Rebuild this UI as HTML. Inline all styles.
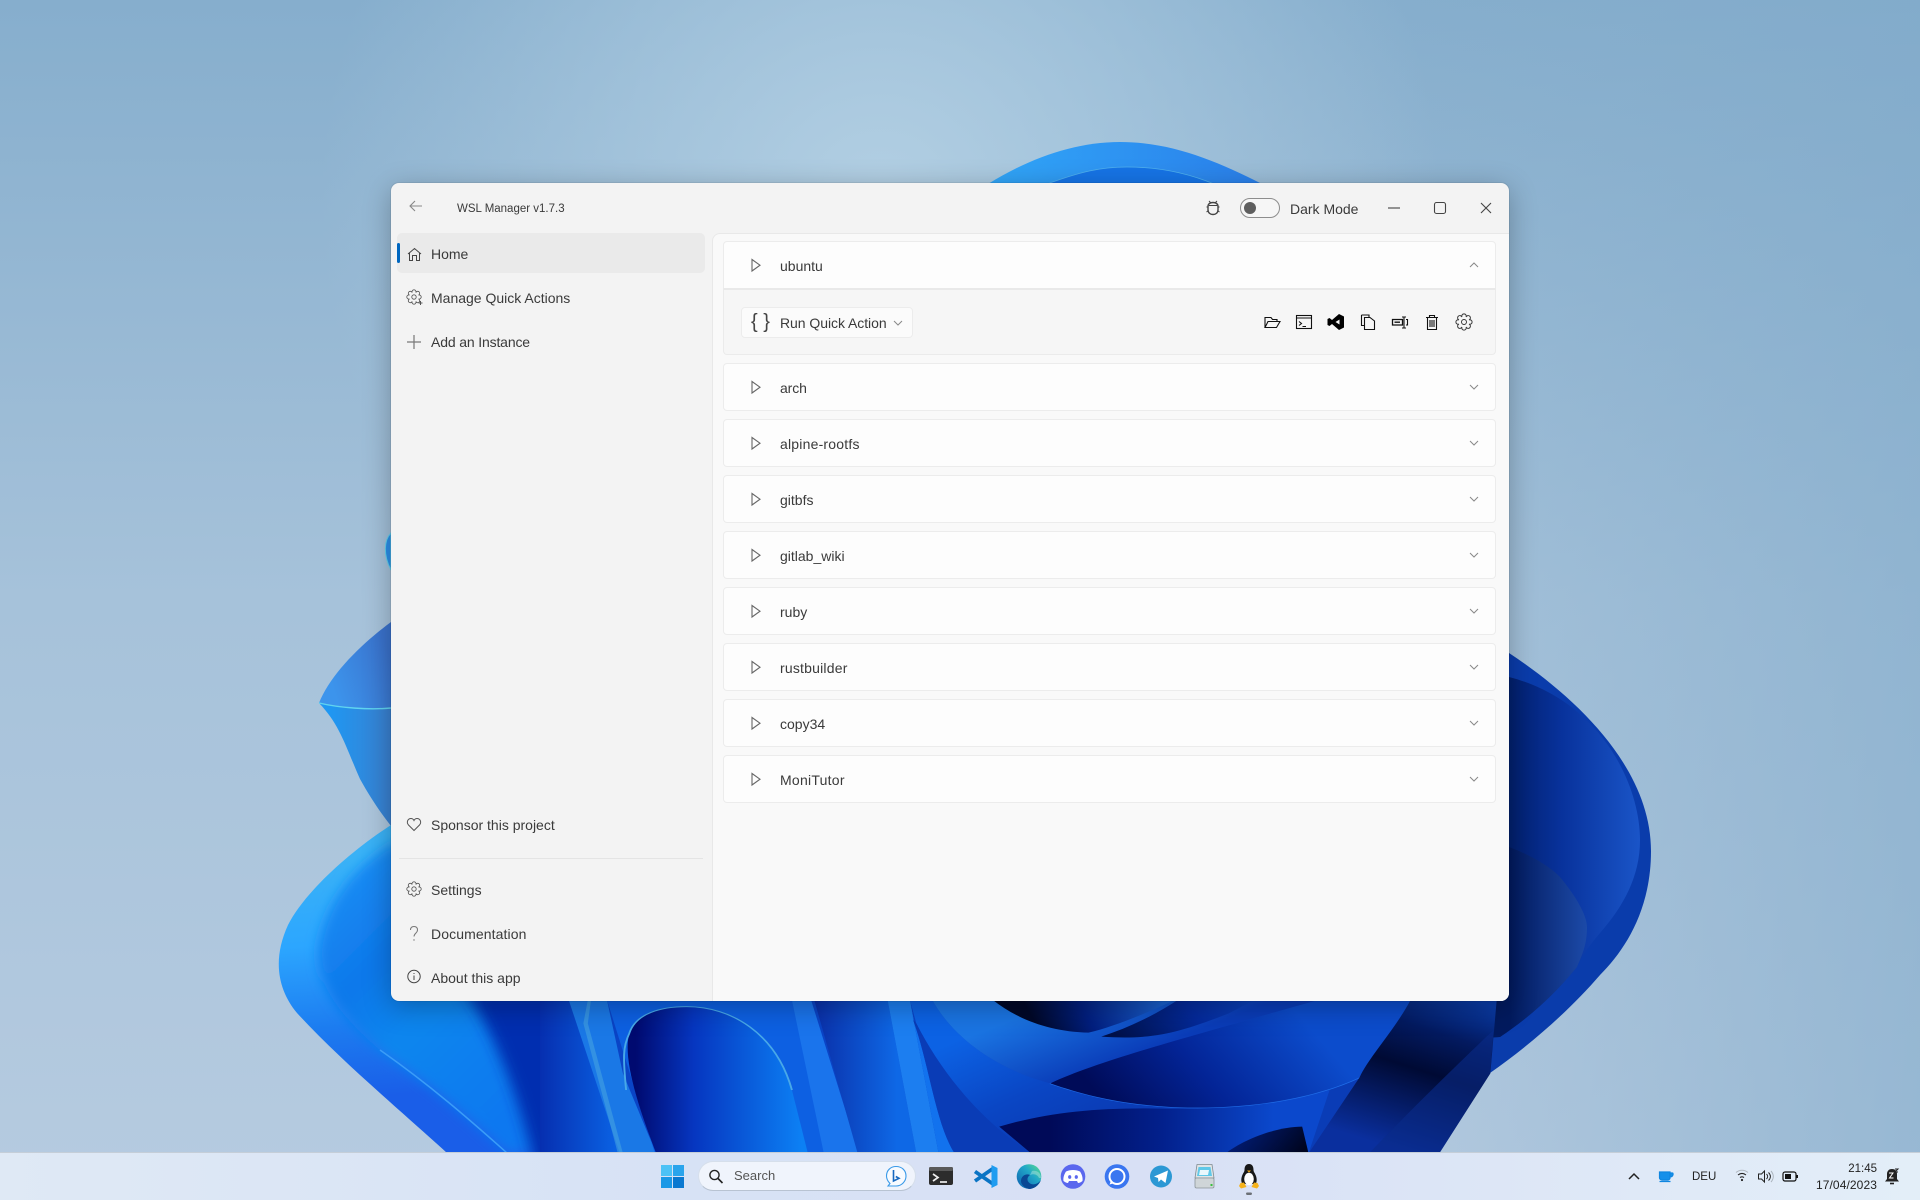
<!DOCTYPE html>
<html lang="en"><head><meta charset="utf-8"><title>WSL Manager</title>
<style>
*{box-sizing:border-box}
html,body{margin:0;padding:0;width:1920px;height:1200px;overflow:hidden;background:#a8c4dc;font-family:"Liberation Sans",sans-serif}
svg{position:absolute;left:0;top:0;overflow:visible}
#win{position:absolute;left:391px;top:183px;width:1118px;height:818px;background:#f3f3f3;border-radius:8px;box-shadow:0 6px 28px rgba(0,0,0,.28),0 0 0 1px rgba(0,0,0,.06)}
#content{position:absolute;left:712px;top:233px;width:797px;height:768px;background:#f9f9f9;border-left:1px solid #e8e8e8;border-top:1px solid #e8e8e8;border-top-left-radius:8px;border-bottom-right-radius:8px}
.home{position:absolute;left:397px;top:233px;width:308px;height:40px;background:#eaeaea;border-radius:5px}
.ind{position:absolute;left:397px;top:243px;width:3px;height:20px;background:#0067c0;border-radius:2px}
.div{position:absolute;left:399px;top:858px;width:304px;height:1px;background:#e4e4e4}
.row{position:absolute;left:723px;width:773px;height:48px;background:#fdfdfd;border:1px solid #ececec;border-radius:4px}
.panel{position:absolute;left:723px;top:288px;width:773px;height:67px;background:#f6f6f6;border:1px solid #ebebeb;border-top:2px solid #e9e9e9;border-radius:0 0 4px 4px}
.btn{position:absolute;left:741px;top:307px;width:172px;height:31px;background:#fbfbfb;border:1px solid #ececec;border-radius:4px}
.t{position:absolute;white-space:nowrap;line-height:20px;font-size:14px;color:#3a3a3a}
#task{position:absolute;left:0;top:1152px;width:1920px;height:48px;background:linear-gradient(90deg,#dfe9f5 0%,#d7e2f5 35%,#d8e0f5 60%,#e3eef8 100%);border-top:1px solid #c5ced8}
.pill{position:absolute;left:698px;top:1161px;width:218px;height:30px;border-radius:15px;background:#f0f4fc;border:1px solid #d6dfeb;border-bottom:1px solid #b8c3d2}
</style></head><body>

<svg width="1920" height="1200" viewBox="0 0 1920 1200">
<defs>
<filter id="b6" x="-30%" y="-30%" width="160%" height="160%"><feGaussianBlur stdDeviation="6"/></filter>
<filter id="b10" x="-30%" y="-30%" width="160%" height="160%"><feGaussianBlur stdDeviation="7"/></filter>
<linearGradient id="sky" x1="0" y1="0" x2="0" y2="1"><stop offset="0" stop-color="#86aecd"/><stop offset=".5" stop-color="#a6c2da"/><stop offset="1" stop-color="#b6cbe0"/></linearGradient>
<radialGradient id="glow" gradientUnits="userSpaceOnUse" cx="880" cy="200" r="560"><stop offset="0" stop-color="#b2cfe3" stop-opacity="1"/><stop offset="1" stop-color="#b2cfe3" stop-opacity="0"/></radialGradient>
<linearGradient id="skyR" x1="0" y1="0" x2="1" y2="0"><stop offset=".7" stop-color="#7fa9c9" stop-opacity="0"/><stop offset="1" stop-color="#7fa9c9" stop-opacity=".55"/></linearGradient>
<linearGradient id="top1" x1="0" y1="0" x2="1" y2="0"><stop offset="0" stop-color="#31a6f8"/><stop offset="1" stop-color="#2a7fea"/></linearGradient>
<linearGradient id="pet1" gradientUnits="userSpaceOnUse" x1="330" y1="680" x2="391" y2="660"><stop offset="0" stop-color="#3c94ec"/><stop offset="1" stop-color="#3a72cc"/></linearGradient>
<linearGradient id="pet2" gradientUnits="userSpaceOnUse" x1="330" y1="730" x2="391" y2="730"><stop offset="0" stop-color="#1f97f2"/><stop offset="1" stop-color="#3a80cf"/></linearGradient>
<linearGradient id="low1" gradientUnits="userSpaceOnUse" x1="320" y1="860" x2="340" y2="1100"><stop offset="0" stop-color="#3ab2f6"/><stop offset=".35" stop-color="#2ca6ff"/><stop offset=".7" stop-color="#1c7cf0"/><stop offset="1" stop-color="#1a5ee8"/></linearGradient>
<linearGradient id="low2" gradientUnits="userSpaceOnUse" x1="320" y1="900" x2="520" y2="1100"><stop offset="0" stop-color="#1a8cf4"/><stop offset=".3" stop-color="#0e78ea"/><stop offset=".55" stop-color="#0f86ee"/><stop offset="1" stop-color="#0f78f0"/></linearGradient>
<linearGradient id="archG" gradientUnits="userSpaceOnUse" x1="150" y1="0" x2="410" y2="0"><stop offset="0" stop-color="#000a70"/><stop offset=".35" stop-color="#0636c0"/><stop offset="1" stop-color="#0c80f4"/></linearGradient>
<linearGradient id="s1" gradientUnits="userSpaceOnUse" x1="0" y1="0" x2="120" y2="0"><stop offset="0" stop-color="#062fb0"/><stop offset="1" stop-color="#0a62e4"/></linearGradient>
<linearGradient id="s2" gradientUnits="userSpaceOnUse" x1="430" y1="0" x2="560" y2="0"><stop offset="0" stop-color="#0a2fa8"/><stop offset="1" stop-color="#0e68e6"/></linearGradient>
<linearGradient id="fa" gradientUnits="userSpaceOnUse" x1="700" y1="120" x2="820" y2="280"><stop offset="0" stop-color="#1a74e2"/><stop offset="1" stop-color="#0a3cb8"/></linearGradient>
<linearGradient id="fb" gradientUnits="userSpaceOnUse" x1="620" y1="180" x2="830" y2="420"><stop offset="0" stop-color="#0c62e4"/><stop offset=".6" stop-color="#0a46c4"/><stop offset="1" stop-color="#0a3cb6"/></linearGradient>
<linearGradient id="fc" gradientUnits="userSpaceOnUse" x1="800" y1="420" x2="1150" y2="420"><stop offset="0" stop-color="#000a58"/><stop offset=".5" stop-color="#02208c"/><stop offset="1" stop-color="#0b48cc"/></linearGradient>
<linearGradient id="fd" gradientUnits="userSpaceOnUse" x1="860" y1="280" x2="1210" y2="120"><stop offset="0" stop-color="#000b58"/><stop offset=".45" stop-color="#032496"/><stop offset="1" stop-color="#0c4ccc"/></linearGradient>
<linearGradient id="fe" gradientUnits="userSpaceOnUse" x1="780" y1="110" x2="980" y2="50"><stop offset="0" stop-color="#000828"/><stop offset=".4" stop-color="#021f80"/><stop offset="1" stop-color="#1a62d0"/></linearGradient>
<linearGradient id="ff" gradientUnits="userSpaceOnUse" x1="900" y1="130" x2="1110" y2="40"><stop offset="0" stop-color="#001048"/><stop offset=".6" stop-color="#042a9c"/><stop offset="1" stop-color="#0a40b8"/></linearGradient>
<linearGradient id="fg" gradientUnits="userSpaceOnUse" x1="1280" y1="440" x2="1510" y2="60"><stop offset="0" stop-color="#0a2f9e"/><stop offset=".5" stop-color="#000a34"/><stop offset=".75" stop-color="#031a60"/><stop offset="1" stop-color="#0a3ca8"/></linearGradient>
<linearGradient id="fh" gradientUnits="userSpaceOnUse" x1="1080" y1="420" x2="1200" y2="470"><stop offset="0" stop-color="#021f80"/><stop offset="1" stop-color="#000520"/></linearGradient>
<linearGradient id="r1" gradientUnits="userSpaceOnUse" x1="1510" y1="0" x2="1640" y2="0"><stop offset="0" stop-color="#02206e"/><stop offset=".4" stop-color="#08329c"/><stop offset="1" stop-color="#1a55c8"/></linearGradient>
<linearGradient id="r2" gradientUnits="userSpaceOnUse" x1="1510" y1="0" x2="1587" y2="0"><stop offset="0" stop-color="#021a5e"/><stop offset="1" stop-color="#1c4aa8"/></linearGradient>
<linearGradient id="edge" x1="1" y1="0" x2="0" y2="1"><stop offset="0" stop-color="#5ee08a"/><stop offset=".4" stop-color="#21a8c8"/><stop offset="1" stop-color="#0c5cb0"/></linearGradient>
<clipPath id="bot"><rect x="0" y="0" width="1920" height="1153"/></clipPath>
<clipPath id="petal"><path d="M391 825C345 855 303 895 288 925C272 960 278 990 297 1013C340 1060 400 1110 447 1153H570V825Z"/></clipPath>
<symbol id="gear" viewBox="0 0 16 16"><path d="M12.43 6.16A2 2 0 1 1 12.43 9.84A2 2 0 1 1 9.84 12.43A2 2 0 1 1 6.16 12.43A2 2 0 1 1 3.57 9.84A2 2 0 1 1 3.57 6.16A2 2 0 1 1 6.16 3.57A2 2 0 1 1 9.84 3.57A2 2 0 1 1 12.43 6.16Z" fill="none" stroke="currentColor" stroke-width=".85"/><circle cx="8" cy="8" r="2.2" fill="none" stroke="currentColor" stroke-width=".85"/></symbol>
</defs>

<rect width="1920" height="1200" fill="url(#sky)"/>
<rect width="1920" height="1200" fill="url(#skyR)"/>
<rect width="1920" height="900" fill="url(#glow)"/>

<!-- top dome -->
<path d="M988 184C1030 158 1075 142 1120 142C1170 142 1215 160 1262 184Z" fill="url(#top1)"/>
<path d="M1047 184C1080 172 1100 167 1127 167C1160 167 1190 174 1214 184Z" fill="#1674e6" stroke="#4fb0ee" stroke-width=".8"/>

<!-- left -->
<path d="M391 533C384 540 383 555 391 570Z" fill="#2b8fe8" stroke="#5fd0f0"/>
<path d="M391 622C360 645 330 675 319 703C340 708 370 710 391 708Z" fill="url(#pet1)"/>
<path d="M319 703C340 725 345 745 360 779C370 797 380 812 391 826V708C370 710 340 708 319 703Z" fill="url(#pet2)"/>
<path d="M319 703C340 708 370 710 391 708" fill="none" stroke="#60d4f0" stroke-width="1.4"/>
<path d="M391 825C345 855 303 895 288 925C272 960 278 990 297 1013C340 1060 400 1110 447 1153H570V825Z" fill="url(#low1)"/>
<g clip-path="url(#petal)">
<path d="M391 844C350 870 325 905 318 948C316 985 340 1015 380 1050C430 1085 470 1120 507 1153H570V844Z" fill="url(#low2)" filter="url(#b6)"/>
<path d="M380 1050C430 1085 470 1120 507 1153" fill="none" stroke="#3a9cf8" stroke-width="1.5"/>
<path d="M462 990L590 990L580 1170H536C522 1110 502 1050 472 1001Z" fill="#062fb0" filter="url(#b10)"/>
</g>

<!-- right -->
<path d="M1509 653C1580 700 1651 770 1651 851C1651 910 1625 950 1600 975C1570 1010 1530 1045 1490 1073L1439 1153H1300V1000H1509Z" fill="#0a3cab"/>
<path d="M1509 677C1540 685 1565 700 1583 717C1620 750 1640 800 1640 840C1640 880 1620 910 1600 933C1590 945 1582 955 1577 967C1550 1000 1525 1020 1500 1037L1450 1040V677Z" fill="url(#r1)"/>
<path d="M1509 847C1530 855 1548 865 1560 877C1575 895 1587 915 1587 927C1587 945 1582 955 1577 967C1550 1000 1525 1020 1500 1037L1450 1040V847Z" fill="url(#r2)"/>

<!-- bottom folds authored in zoom coords -->
<g clip-path="url(#bot)">
<g transform="translate(540,990) scale(.6378,.3333)">
<rect x="0" y="30" width="1300" height="460" fill="#0a44c6"/>
<path d="M0 30L50 30L125 490H0Z" fill="url(#s1)"/>
<path d="M45 30L105 30L130 250L182 490L125 490Z" fill="#1a78e6"/>
<path d="M75 30L80 30L75 100L130 490L122 490L68 100Z" fill="#52b0e0" opacity=".45"/>
<path d="M105 30L400 30L500 490L180 490Z" fill="#0d60e2"/>
<path d="M182 490C150 330 130 200 140 130C150 70 190 50 230 50C300 50 370 130 395 300L420 490Z" fill="url(#archG)"/>
<path d="M135 300C130 200 130 170 140 130C150 70 190 50 230 50C300 50 370 130 395 300" fill="none" stroke="#48a8e8" stroke-width="3"/>
<path d="M395 30L425 30L500 490H445Z" fill="#1a74ec"/>
<path d="M430 30L545 30L590 490H498Z" fill="url(#s2)"/>
<path d="M545 30L580 30L625 490H590Z" fill="#1c7ef0"/>
<path d="M580 30L615 30C650 150 720 240 800 280C860 320 920 345 1000 352C1120 360 1220 320 1285 262L1210 490H770C690 390 630 250 590 100Z" fill="url(#fb)"/>
<path d="M585 90C610 220 620 400 650 490H625L580 30Z" fill="#1272ee"/>
<path d="M590 100C630 250 690 390 770 490H650C620 400 610 220 585 90Z" fill="#0a3cb6"/>
<path d="M615 30C650 150 720 240 800 280C880 210 1000 150 1220 30Z" fill="url(#fa)"/>
<path d="M720 410C790 370 860 355 950 355C1060 360 1150 350 1238 300L1205 490H770Z" fill="url(#fc)"/>
<path d="M800 280C860 320 920 345 1000 352C1120 360 1220 320 1285 262" fill="none" stroke="#1f6ce8" stroke-width="4"/>
<path d="M800 280C880 210 1000 150 1220 30L1365 30C1340 120 1300 200 1285 262C1220 320 1120 360 1000 352C920 345 860 320 800 280Z" fill="url(#fd)"/>
<path d="M1075 490C1110 440 1160 410 1195 410L1205 490Z" fill="url(#fh)"/>
<path d="M710 30C750 90 800 125 860 128C900 110 950 70 995 30Z" fill="url(#fe)"/>
<path d="M880 140C960 150 1000 130 1080 70L1120 30H1000C960 80 920 115 880 140Z" fill="url(#ff)"/>
<path d="M1285 262C1300 200 1340 120 1365 30L1500 30L1490 250L1410 490H1205Z" fill="url(#fg)"/>
<path d="M1300 490C1370 350 1440 220 1495 120L1490 250L1410 490Z" fill="#0a2c88" opacity=".6"/>
</g></g>
</svg>

<div id="win"></div>
<div id="content"></div>
<div class="home"></div><div class="ind"></div><div class="div"></div>

<div class="row" style="top:241px;border-radius:4px 4px 0 0;height:48px"></div>
<div class="panel"></div>
<div class="btn"></div>
<div class="row" style="top:363px"></div>
<div class="row" style="top:419px"></div>
<div class="row" style="top:475px"></div>
<div class="row" style="top:531px"></div>
<div class="row" style="top:587px"></div>
<div class="row" style="top:643px"></div>
<div class="row" style="top:699px"></div>
<div class="row" style="top:755px"></div>

<div class="t" style="left:457px;top:199px;font-size:11.5px">WSL Manager v1.7.3</div>
<div class="t" style="left:1290px;top:199px;font-size:14px">Dark Mode</div>
<div class="t" style="left:431px;top:244px">Home</div>
<div class="t" style="left:431px;top:288px">Manage Quick Actions</div>
<div class="t" style="left:431px;top:332px;letter-spacing:-.15px">Add an Instance</div>
<div class="t" style="left:431px;top:815px">Sponsor this project</div>
<div class="t" style="left:431px;top:880px">Settings</div>
<div class="t" style="left:431px;top:924px;letter-spacing:.1px">Documentation</div>
<div class="t" style="left:431px;top:968px">About this app</div>

<div class="t" style="left:780px;top:256px">ubuntu</div>
<div class="t" style="left:780px;top:313px;letter-spacing:-.05px">Run Quick Action</div>
<div class="t" style="left:751px;top:311px;font-size:20px;line-height:22px;color:#444">{ }</div>
<div class="t" style="left:780px;top:378px;letter-spacing:-.1px">arch</div>
<div class="t" style="left:780px;top:434px;letter-spacing:.2px">alpine-rootfs</div>
<div class="t" style="left:780px;top:490px">gitbfs</div>
<div class="t" style="left:780px;top:546px">gitlab_wiki</div>
<div class="t" style="left:780px;top:602px">ruby</div>
<div class="t" style="left:780px;top:658px;letter-spacing:.2px">rustbuilder</div>
<div class="t" style="left:780px;top:714px">copy34</div>
<div class="t" style="left:780px;top:770px;letter-spacing:.25px">MoniTutor</div>

<svg width="1920" height="1200" viewBox="0 0 1920 1200" fill="none" stroke="#555" stroke-width="1">
<!-- back -->
<path d="M422 206H410M415 201L410 206L415 211" stroke="#888" stroke-width="1.1"/>
<!-- home -->
<path d="M408 254L414.5 248.5L421 254M409.5 253V260.5H412.5V255.5H416.5V260.5H419.5V253" stroke="#444"/>
<!-- manage gear -->
<use href="#gear" x="406" y="289" width="16" height="16" color="#555"/>
<path d="M418.5 303H422.5M420.5 301V305" stroke="#555"/>
<!-- add -->
<path d="M414 335V349M407 342H421" stroke="#777" stroke-width="1.2"/>
<!-- heart -->
<path d="M414 830.5L408.5 825C406 822 408 818.5 411 818.5C412.5 818.5 413.5 819.5 414 820.5C414.5 819.5 415.5 818.5 417 818.5C420 818.5 422 822 419.5 825Z" stroke="#555"/>
<!-- settings -->
<use href="#gear" x="406" y="881" width="16" height="16" color="#555"/>
<!-- help -->
<path d="M410.5 930C410.5 927.5 412 926.5 414 926.5C416.5 926.5 417.5 928 417.5 930C417.5 933 414 933.5 414 936.5" stroke="#777"/>
<circle cx="414" cy="940" r=".7" fill="#777" stroke="none"/>
<!-- info -->
<circle cx="414" cy="976.5" r="6.2" stroke="#444"/>
<path d="M414 975.5V980M414 973V974" stroke="#444"/>

<!-- bug -->
<path d="M1208 206.5C1208 203.5 1210.5 202.5 1213 202.5C1215.5 202.5 1218 203.5 1218 206.5V210C1218 213 1215.5 214.5 1213 214.5C1210.5 214.5 1208 213 1208 210Z" stroke="#444" stroke-width="1.4"/>
<path d="M1209 201L1211 203M1217 201L1215 203M1206.5 207H1208.5M1217.5 207H1219.5M1206.5 212L1208.5 210.5M1219.5 212L1217.5 210.5M1209 205.5H1217" stroke="#444"/>
<!-- toggle -->
<rect x="1240.5" y="198.5" width="39" height="19" rx="9.5" stroke="#8d8d8d" fill="#f6f6f6"/>
<circle cx="1250" cy="208" r="6" fill="#5e5e5e" stroke="none"/>
<!-- window controls -->
<path d="M1388 208H1400" stroke="#444" stroke-width="1.1"/>
<rect x="1434.5" y="202.5" width="11" height="11" rx="2" stroke="#444" stroke-width="1.1"/>
<path d="M1481 203L1491 213M1491 203L1481 213" stroke="#444" stroke-width="1.1"/>

<!-- chevrons -->
<path d="M1470 267L1474 263L1478 267" stroke="#888"/>
<path d="M1470 385L1474 389L1478 385M1470 441L1474 445L1478 441M1470 497L1474 501L1478 497M1470 553L1474 557L1478 553M1470 609L1474 613L1478 609M1470 665L1474 669L1478 665M1470 721L1474 725L1478 721M1470 777L1474 781L1478 777" stroke="#888"/>
<path d="M894 321L898 325L902 321" stroke="#888"/>
<!-- triangles -->
<g stroke="#666" stroke-width="1.1">
<path d="M752 259.5V271L760 265.2Z"/><path d="M752 381.5V393L760 387.2Z"/><path d="M752 437.5V449L760 443.2Z"/><path d="M752 493.5V505L760 499.2Z"/><path d="M752 549.5V561L760 555.2Z"/><path d="M752 605.5V617L760 611.2Z"/><path d="M752 661.5V673L760 667.2Z"/><path d="M752 717.5V729L760 723.2Z"/><path d="M752 773.5V785L760 779.2Z"/>
</g>

<!-- panel icons -->
<g stroke="#111" stroke-width="1.1">
<path d="M1265 327.5V317.5H1271L1272.5 319.5H1277V321.5M1265 327.5L1268 321.5H1280L1276.5 327.5Z"/>
<rect x="1296.5" y="315.5" width="15" height="13"/>
<path d="M1296.5 318H1311.5M1299 321.5L1301.5 323.5L1299 325.5M1302.5 326.5H1306"/>
<path d="M1339 314L1344 316.5V327.5L1339 330L1332 324L1329.5 326L1327.5 325V319L1329.5 318L1332 320ZM1339.5 319.5L1335.5 322L1339.5 324.5Z" fill="#000" fill-rule="evenodd" stroke="none"/>
<path d="M1361.5 315V325.5H1364.5M1361.5 315H1369V317.5M1364.5 317.5H1370L1374.5 321V329.5H1364.5Z"/>
<path d="M1392.5 319.5H1402.5V325H1392.5ZM1394.5 322.2H1400" stroke-width="1.3"/>
<path d="M1404 317V328M1402 317H1406M1402 328H1406M1406 319.5H1407.5V325H1406"/>
<path d="M1426 317.5H1438M1429.5 317.5V315.5H1434.5V317.5M1427.5 317.5V329.5H1436.5V317.5M1430 320V327M1432 320V327M1434 320V327"/>
</g>
<use href="#gear" x="1455" y="313" width="18" height="18" color="#333"/>
</svg>

<div id="task"></div>
<div class="pill"></div>
<div class="t" style="left:734px;top:1166px;font-size:13px;color:#555">Search</div>
<div class="t" style="left:1692px;top:1167px;font-size:11.5px;color:#222">DEU</div>
<div class="t" style="left:1800px;width:77px;top:1159px;font-size:11.5px;color:#222;text-align:right">21:45</div>
<div class="t" style="left:1800px;width:77px;top:1175px;font-size:12px;letter-spacing:.1px;color:#222;text-align:right">17/04/2023</div>

<svg width="1920" height="1200" viewBox="0 0 1920 1200" fill="none">
<!-- start -->
<rect x="661" y="1165" width="11" height="11" fill="#4cc2f6"/><rect x="673" y="1165" width="11" height="11" fill="#2aa4ec"/><rect x="661" y="1177" width="11" height="11" fill="#1a98e6"/><rect x="673" y="1177" width="11" height="11" fill="#0a78d0"/>
<!-- magnifier -->
<circle cx="714.5" cy="1175" r="4.6" stroke="#222" stroke-width="1.4"/><path d="M718 1178.5L722.5 1183" stroke="#222" stroke-width="1.6"/>
<!-- bing -->
<path d="M896 1166.5C902 1166.5 906 1170.5 906 1176C906 1181 902 1186 896 1186H888L890 1183.5C888 1181.5 886.5 1179 886.5 1176C886.5 1170.5 890.5 1166.5 896 1166.5Z" stroke="#3a9ae8" stroke-width="1.1" fill="#f8fbff"/>
<path d="M893.5 1170V1181L899 1178.3L895.8 1176.5" stroke="#1668c0" stroke-width="1.6"/>
<!-- terminal -->
<rect x="929" y="1167" width="24" height="18" rx="2" fill="#2c2c2c"/><rect x="929" y="1167" width="24" height="4" rx="1.5" fill="#5a5a5a"/>
<path d="M933 1174L938 1177.5L933 1181" stroke="#eee" stroke-width="1.7"/><path d="M940 1182H947" stroke="#eee" stroke-width="1.7"/>
<!-- vscode -->
<path d="M975 1171.5L993 1184M975 1181L993 1168.5" stroke="#0a74c4" stroke-width="3.8"/>
<path d="M991.5 1165L997.5 1168V1185L991.5 1188Z" fill="#1f9cf0"/>
<!-- edge -->
<circle cx="1029" cy="1176.5" r="12.3" fill="url(#edge)"/>
<path d="M1041 1180C1038 1184 1034 1185 1031 1184C1027 1182 1026 1178 1030 1175C1026 1173 1021 1176 1021 1181C1021 1185 1025 1188 1029 1189C1034 1189 1039 1185 1041 1180Z" fill="#0a4894"/>
<path d="M1030 1175C1034 1173 1038 1175 1039 1178L1041 1178C1041 1173 1037 1170 1032 1171Z" fill="#dff5e8" opacity=".35"/>
<!-- discord -->
<circle cx="1073" cy="1176.5" r="12.3" fill="#5a67ee"/>
<path d="M1066 1171.5C1070 1169.5 1076 1169.5 1080 1171.5C1082 1174.5 1083 1178 1082.5 1181C1080.5 1182.5 1079 1183 1078 1183L1077 1181H1069L1068 1183C1067 1183 1065.5 1182.5 1063.5 1181C1063 1178 1064 1174.5 1066 1171.5Z" fill="#fff"/>
<ellipse cx="1069.7" cy="1177" rx="1.6" ry="1.9" fill="#5a67ee"/><ellipse cx="1076.3" cy="1177" rx="1.6" ry="1.9" fill="#5a67ee"/>
<!-- signal -->
<circle cx="1117" cy="1176.5" r="12.3" fill="#3a76f0"/>
<circle cx="1117" cy="1176.5" r="7.5" stroke="#fff" stroke-width="2"/>
<path d="M1111 1181L1109.5 1184.5L1113 1183.5" fill="#fff"/>
<!-- telegram -->
<circle cx="1161" cy="1176.5" r="11" fill="#2c98d4"/>
<path d="M1154 1176.5L1168 1170.5L1165.5 1183L1161 1179.5L1158.5 1182L1158 1178Z" fill="#fff"/>
<!-- scanner -->
<path d="M1197 1164.5H1212L1214 1178H1195Z" fill="#dfe4e6" stroke="#7f8a90" stroke-width=".8"/>
<path d="M1198.5 1167H1210.5L1212 1176H1197Z" fill="#5fc8e8"/>
<path d="M1200 1170H1209L1208 1175H1199Z" fill="#e8f8fc"/>
<rect x="1195" y="1178" width="19" height="10" rx="1.5" fill="#cfd5d8" stroke="#8a9499" stroke-width=".8"/>
<rect x="1210.5" y="1184" width="2" height="2" fill="#3ac040"/>
<!-- tux -->
<path d="M1249 1164C1245.5 1164 1244.5 1167 1244.5 1170C1244.5 1172 1243 1173 1242 1176C1241 1179 1241 1182 1242.5 1184H1255.5C1257 1182 1257 1179 1256 1176C1255 1173 1253.5 1172 1253.5 1170C1253.5 1167 1252.5 1164 1249 1164Z" fill="#181818"/>
<ellipse cx="1249" cy="1179" rx="4.8" ry="6.2" fill="#fff"/>
<path d="M1247 1170.5H1251L1249 1172.5Z" fill="#f2a818"/>
<path d="M1240.5 1183L1244 1182.5L1246.5 1187L1241 1188.5L1239 1186Z" fill="#f6b21b"/>
<path d="M1257.5 1183L1254 1182.5L1251.5 1187L1257 1188.5L1259 1186Z" fill="#f6b21b"/>
<rect x="1246" y="1192.5" width="6" height="2.5" rx="1.2" fill="#6c7076"/>
<!-- tray -->
<path d="M1629 1179L1634 1174L1639 1179" stroke="#222" stroke-width="1.5"/>
<path d="M1659.5 1172H1670V1178C1670 1179 1669 1180 1668 1180H1662C1661 1180 1659.5 1179 1659.5 1178ZM1670 1173H1672.5C1673.5 1173 1673.5 1177 1670 1177M1659.5 1181.5H1670.5" stroke="#0f86e0" stroke-width="1.2" fill="#1590ea"/>
<path d="M1736 1172.5C1739.5 1169.5 1744.5 1169.5 1748 1172.5" stroke="#b0b8c0" stroke-width="1.1"/>
<path d="M1738 1175C1740.5 1173 1743.5 1173 1746 1175M1740 1177.5C1741.5 1176.5 1742.5 1176.5 1744 1177.5" stroke="#222" stroke-width="1.1"/>
<circle cx="1742" cy="1180" r="1.1" fill="#222"/>
<path d="M1758.5 1174V1179H1761.5L1764.5 1182V1171L1761.5 1174Z" stroke="#222" stroke-width="1"/>
<path d="M1766.5 1174C1768 1175.5 1768 1177.5 1766.5 1179M1768.5 1172.5C1771 1175 1771 1178 1768.5 1180.5" stroke="#222"/>
<path d="M1771 1171C1774 1174.5 1774 1178.5 1771 1182" stroke="#aab3bc"/>
<rect x="1783" y="1172" width="13" height="9" rx="2" stroke="#111" stroke-width="1.2"/>
<rect x="1785" y="1174" width="6" height="5" fill="#111"/>
<rect x="1796.5" y="1175" width="1.5" height="3" fill="#111"/>
<path d="M1892 1169C1888.5 1169 1887 1171.5 1887 1174V1179L1885 1181.5H1899L1897 1179V1174C1897 1171.5 1895.5 1169 1892 1169Z" fill="#222"/>
<path d="M1890 1183.5H1894" stroke="#222" stroke-width="1.6"/>
<path d="M1889 1173H1893L1889.5 1178H1893.5" stroke="#fff" stroke-width="1"/>
<path d="M1895 1169H1898L1895 1172H1898" stroke="#222" stroke-width="1"/>
</svg>

</body></html>
